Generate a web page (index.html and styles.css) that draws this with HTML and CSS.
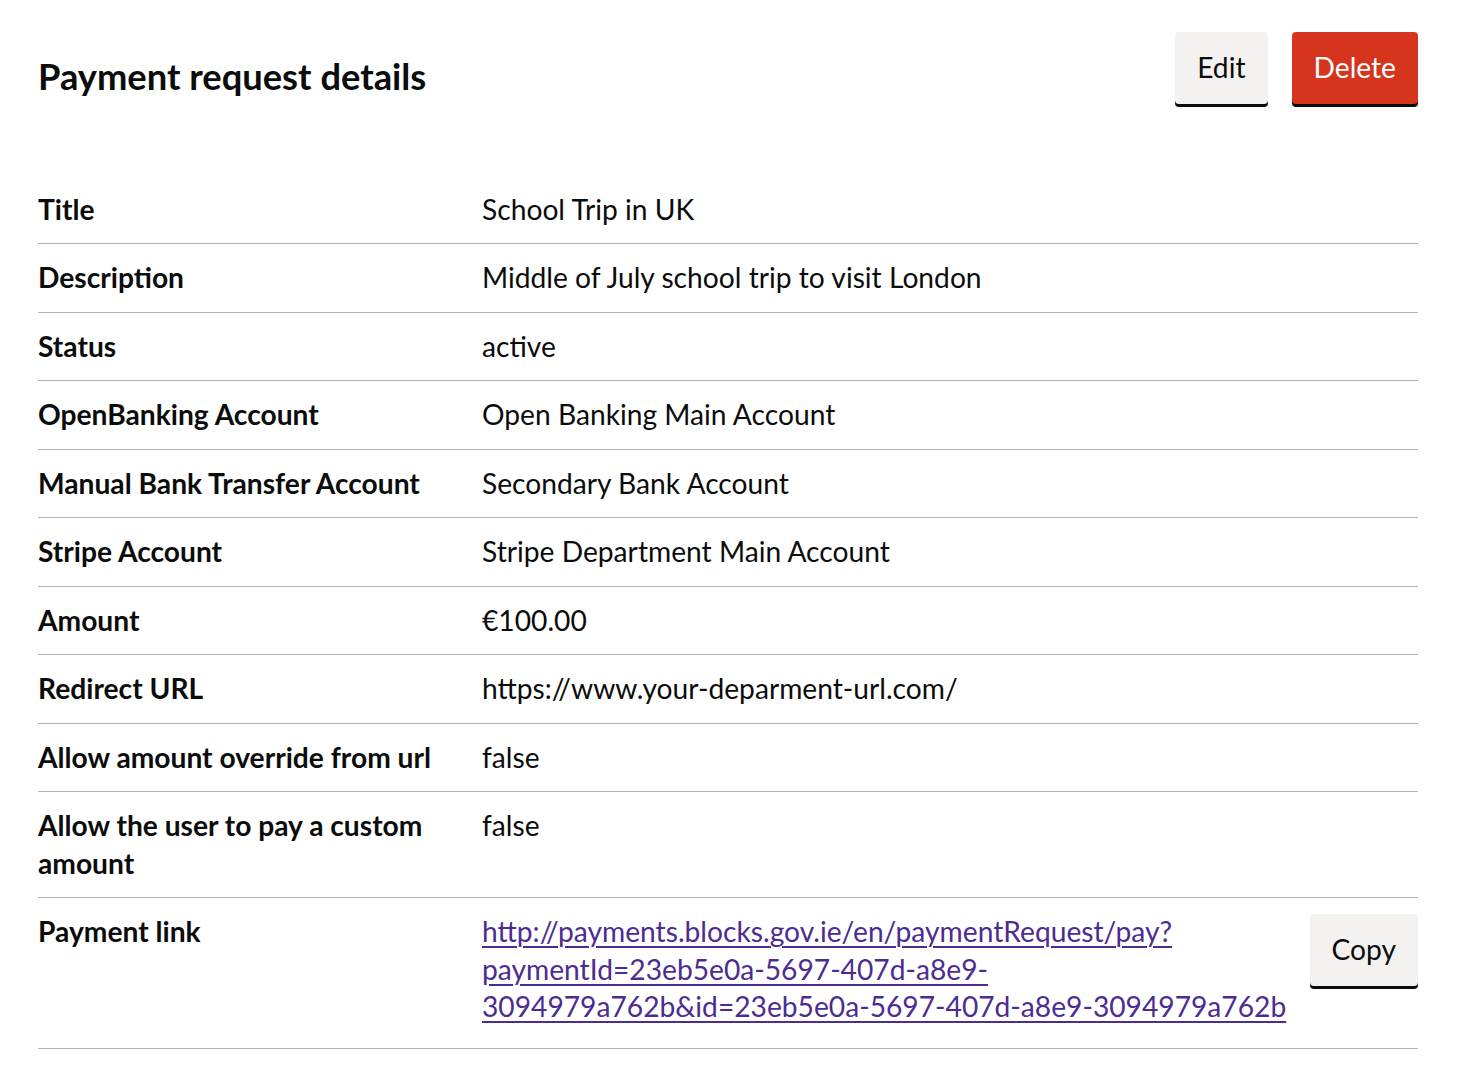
FILE: index.html
```html
<!DOCTYPE html>
<html lang="en">
<head>
<meta charset="utf-8">
<title>Payment request details</title>
<link rel="stylesheet" href="styles.css">
</head>
<body>
<main class="page">
  <div class="header">
    <h1 class="heading">Payment request details</h1>
    <div class="header-actions">
      <button class="btn btn-secondary" type="button">Edit</button>
      <button class="btn btn-warning" type="button">Delete</button>
    </div>
  </div>
  <dl class="summary">
    <div class="row"><dt class="key">Title</dt><dd class="value">School Trip in UK</dd></div>
    <div class="row"><dt class="key">Description</dt><dd class="value">Middle of July school trip to visit London</dd></div>
    <div class="row"><dt class="key">Status</dt><dd class="value">active</dd></div>
    <div class="row"><dt class="key">OpenBanking Account</dt><dd class="value">Open Banking Main Account</dd></div>
    <div class="row"><dt class="key">Manual Bank Transfer Account</dt><dd class="value">Secondary Bank Account</dd></div>
    <div class="row"><dt class="key">Stripe Account</dt><dd class="value">Stripe Department Main Account</dd></div>
    <div class="row"><dt class="key">Amount</dt><dd class="value">€100.00</dd></div>
    <div class="row"><dt class="key">Redirect URL</dt><dd class="value">https://www.your-deparment-url.com/</dd></div>
    <div class="row"><dt class="key">Allow amount override from url</dt><dd class="value">false</dd></div>
    <div class="row"><dt class="key">Allow the user to pay a custom amount</dt><dd class="value">false</dd></div>
    <div class="row row-link">
      <dt class="key">Payment link</dt>
      <dd class="value value-link"><a class="link" href="#">http://payments.blocks.gov.ie/en/paymentRequest/pay?paymentId=23eb5e0a-5697-407d-a8e9-3094979a762b&amp;id=23eb5e0a-5697-407d-a8e9-3094979a762b</a></dd>
      <dd class="actions"><button class="btn btn-secondary" type="button">Copy</button></dd>
    </div>
  </dl>
</main>
</body>
</html>
```

FILE: styles.css
```css
* { box-sizing: border-box; }
html, body { margin: 0; padding: 0; background: #ffffff; }
body {
  font-family: Lato, "Liberation Sans", sans-serif;
  color: #0b0c0c;
  -webkit-font-smoothing: antialiased;
}
.page {
  padding: 32px 54px 0 38px;
}
.header {
  display: flex;
  justify-content: space-between;
  align-items: flex-start;
  margin-bottom: 72px;
}
.heading {
  margin: 22px 0 0 0;
  font-size: 36.3px;
  line-height: 45px;
  font-weight: 700;
}
.header-actions {
  display: flex;
  gap: 24px;
}
.btn {
  font-family: Lato, "Liberation Sans", sans-serif;
  font-size: 28.2px;
  line-height: 37.5px;
  font-weight: 400;
  padding: 15px 20px 15px;
  border: 2px solid transparent;
  border-radius: 4px;
  cursor: pointer;
  margin: 0;
}
.btn-secondary {
  background: #f3f2f1;
  color: #0b0c0c;
  box-shadow: 0 3px 0 #0b0c0c;
}
.btn-warning {
  background: #d4351c;
  color: #ffffff;
  box-shadow: 0 3px 0 #0b0c0c;
}
.summary {
  margin: 0;
  font-size: 28.2px;
  line-height: 37.5px;
}
.row {
  display: flex;
  border-bottom: 1px solid #b1b4b6;
}
.key {
  flex: 0 0 444px;
  padding: 15px 30px 15px 0;
  margin: 0;
  font-weight: 700;
}
.value {
  flex: 1 1 0;
  min-width: 0;
  padding: 15px 0;
  margin: 0;
}
.value-link {
  padding-bottom: 22px;
}
.link {
  color: #4c2c92;
  text-decoration: underline;
  text-decoration-thickness: 2px;
  text-underline-offset: 4px;
}
.actions {
  flex: 0 0 auto;
  margin: 0;
  padding: 16px 0 15px 10px;
}
```
